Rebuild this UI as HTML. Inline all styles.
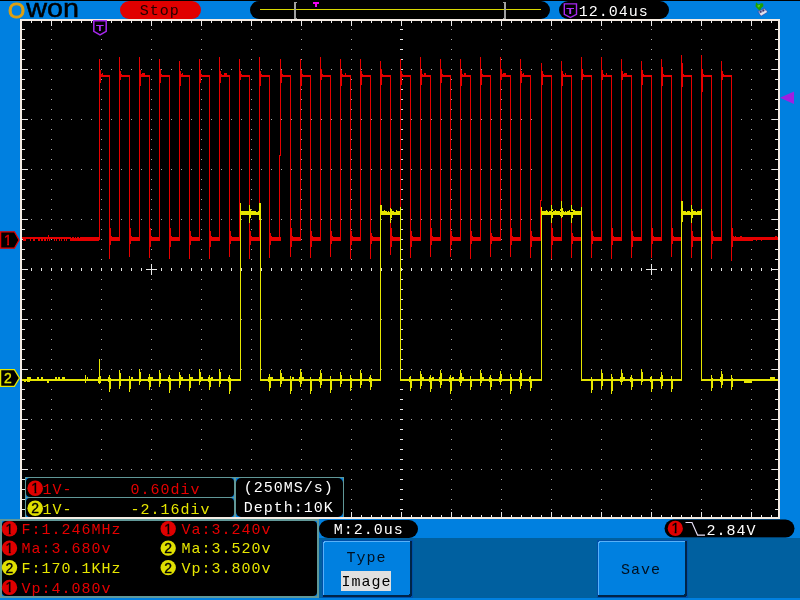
<!DOCTYPE html>
<html lang="en"><head><meta charset="utf-8"><title>OWON oscilloscope</title>
<style>
html,body{margin:0;padding:0;background:#0080e0;overflow:hidden}
svg{display:block;will-change:transform}
.m{font-family:"Liberation Mono","DejaVu Sans Mono",monospace;font-size:15px;letter-spacing:1px}
</style></head><body>
<svg width="800" height="600" viewBox="0 0 800 600">
<g shape-rendering="crispEdges">
<rect x="0" y="0" width="800" height="600" fill="#0080e0"/>
<rect x="0" y="0" width="800" height="1" fill="#000"/>
<rect x="20" y="19" width="760" height="500" fill="#f4ece4"/>
<rect x="22" y="21" width="756" height="496" fill="#000"/>
<path fill="#a8a8a8" d="M51 29h1v1h-1zM51 39h1v1h-1zM51 49h1v1h-1zM51 59h1v1h-1zM51 69h1v1h-1zM51 79h1v1h-1zM51 89h1v1h-1zM51 99h1v1h-1zM51 109h1v1h-1zM51 119h1v1h-1zM51 129h1v1h-1zM51 139h1v1h-1zM51 149h1v1h-1zM51 159h1v1h-1zM51 169h1v1h-1zM51 179h1v1h-1zM51 189h1v1h-1zM51 199h1v1h-1zM51 209h1v1h-1zM51 219h1v1h-1zM51 229h1v1h-1zM51 239h1v1h-1zM51 249h1v1h-1zM51 259h1v1h-1zM51 279h1v1h-1zM51 289h1v1h-1zM51 299h1v1h-1zM51 309h1v1h-1zM51 319h1v1h-1zM51 329h1v1h-1zM51 339h1v1h-1zM51 349h1v1h-1zM51 359h1v1h-1zM51 369h1v1h-1zM51 379h1v1h-1zM51 389h1v1h-1zM51 399h1v1h-1zM51 409h1v1h-1zM51 419h1v1h-1zM51 429h1v1h-1zM51 439h1v1h-1zM51 449h1v1h-1zM51 459h1v1h-1zM51 469h1v1h-1zM51 479h1v1h-1zM51 489h1v1h-1zM51 499h1v1h-1zM51 509h1v1h-1zM101 29h1v1h-1zM101 39h1v1h-1zM101 49h1v1h-1zM101 59h1v1h-1zM101 69h1v1h-1zM101 79h1v1h-1zM101 89h1v1h-1zM101 99h1v1h-1zM101 109h1v1h-1zM101 119h1v1h-1zM101 129h1v1h-1zM101 139h1v1h-1zM101 149h1v1h-1zM101 159h1v1h-1zM101 169h1v1h-1zM101 179h1v1h-1zM101 189h1v1h-1zM101 199h1v1h-1zM101 209h1v1h-1zM101 219h1v1h-1zM101 229h1v1h-1zM101 239h1v1h-1zM101 249h1v1h-1zM101 259h1v1h-1zM101 279h1v1h-1zM101 289h1v1h-1zM101 299h1v1h-1zM101 309h1v1h-1zM101 319h1v1h-1zM101 329h1v1h-1zM101 339h1v1h-1zM101 349h1v1h-1zM101 359h1v1h-1zM101 369h1v1h-1zM101 379h1v1h-1zM101 389h1v1h-1zM101 399h1v1h-1zM101 409h1v1h-1zM101 419h1v1h-1zM101 429h1v1h-1zM101 439h1v1h-1zM101 449h1v1h-1zM101 459h1v1h-1zM101 469h1v1h-1zM101 479h1v1h-1zM101 489h1v1h-1zM101 499h1v1h-1zM101 509h1v1h-1zM151 29h1v1h-1zM151 39h1v1h-1zM151 49h1v1h-1zM151 59h1v1h-1zM151 69h1v1h-1zM151 79h1v1h-1zM151 89h1v1h-1zM151 99h1v1h-1zM151 109h1v1h-1zM151 119h1v1h-1zM151 129h1v1h-1zM151 139h1v1h-1zM151 149h1v1h-1zM151 159h1v1h-1zM151 169h1v1h-1zM151 179h1v1h-1zM151 189h1v1h-1zM151 199h1v1h-1zM151 209h1v1h-1zM151 219h1v1h-1zM151 229h1v1h-1zM151 239h1v1h-1zM151 249h1v1h-1zM151 259h1v1h-1zM151 279h1v1h-1zM151 289h1v1h-1zM151 299h1v1h-1zM151 309h1v1h-1zM151 319h1v1h-1zM151 329h1v1h-1zM151 339h1v1h-1zM151 349h1v1h-1zM151 359h1v1h-1zM151 369h1v1h-1zM151 379h1v1h-1zM151 389h1v1h-1zM151 399h1v1h-1zM151 409h1v1h-1zM151 419h1v1h-1zM151 429h1v1h-1zM151 439h1v1h-1zM151 449h1v1h-1zM151 459h1v1h-1zM151 469h1v1h-1zM151 479h1v1h-1zM151 489h1v1h-1zM151 499h1v1h-1zM151 509h1v1h-1zM201 29h1v1h-1zM201 39h1v1h-1zM201 49h1v1h-1zM201 59h1v1h-1zM201 69h1v1h-1zM201 79h1v1h-1zM201 89h1v1h-1zM201 99h1v1h-1zM201 109h1v1h-1zM201 119h1v1h-1zM201 129h1v1h-1zM201 139h1v1h-1zM201 149h1v1h-1zM201 159h1v1h-1zM201 169h1v1h-1zM201 179h1v1h-1zM201 189h1v1h-1zM201 199h1v1h-1zM201 209h1v1h-1zM201 219h1v1h-1zM201 229h1v1h-1zM201 239h1v1h-1zM201 249h1v1h-1zM201 259h1v1h-1zM201 279h1v1h-1zM201 289h1v1h-1zM201 299h1v1h-1zM201 309h1v1h-1zM201 319h1v1h-1zM201 329h1v1h-1zM201 339h1v1h-1zM201 349h1v1h-1zM201 359h1v1h-1zM201 369h1v1h-1zM201 379h1v1h-1zM201 389h1v1h-1zM201 399h1v1h-1zM201 409h1v1h-1zM201 419h1v1h-1zM201 429h1v1h-1zM201 439h1v1h-1zM201 449h1v1h-1zM201 459h1v1h-1zM201 469h1v1h-1zM201 479h1v1h-1zM201 489h1v1h-1zM201 499h1v1h-1zM201 509h1v1h-1zM251 29h1v1h-1zM251 39h1v1h-1zM251 49h1v1h-1zM251 59h1v1h-1zM251 69h1v1h-1zM251 79h1v1h-1zM251 89h1v1h-1zM251 99h1v1h-1zM251 109h1v1h-1zM251 119h1v1h-1zM251 129h1v1h-1zM251 139h1v1h-1zM251 149h1v1h-1zM251 159h1v1h-1zM251 169h1v1h-1zM251 179h1v1h-1zM251 189h1v1h-1zM251 199h1v1h-1zM251 209h1v1h-1zM251 219h1v1h-1zM251 229h1v1h-1zM251 239h1v1h-1zM251 249h1v1h-1zM251 259h1v1h-1zM251 279h1v1h-1zM251 289h1v1h-1zM251 299h1v1h-1zM251 309h1v1h-1zM251 319h1v1h-1zM251 329h1v1h-1zM251 339h1v1h-1zM251 349h1v1h-1zM251 359h1v1h-1zM251 369h1v1h-1zM251 379h1v1h-1zM251 389h1v1h-1zM251 399h1v1h-1zM251 409h1v1h-1zM251 419h1v1h-1zM251 429h1v1h-1zM251 439h1v1h-1zM251 449h1v1h-1zM251 459h1v1h-1zM251 469h1v1h-1zM251 479h1v1h-1zM251 489h1v1h-1zM251 499h1v1h-1zM251 509h1v1h-1zM301 29h1v1h-1zM301 39h1v1h-1zM301 49h1v1h-1zM301 59h1v1h-1zM301 69h1v1h-1zM301 79h1v1h-1zM301 89h1v1h-1zM301 99h1v1h-1zM301 109h1v1h-1zM301 119h1v1h-1zM301 129h1v1h-1zM301 139h1v1h-1zM301 149h1v1h-1zM301 159h1v1h-1zM301 169h1v1h-1zM301 179h1v1h-1zM301 189h1v1h-1zM301 199h1v1h-1zM301 209h1v1h-1zM301 219h1v1h-1zM301 229h1v1h-1zM301 239h1v1h-1zM301 249h1v1h-1zM301 259h1v1h-1zM301 279h1v1h-1zM301 289h1v1h-1zM301 299h1v1h-1zM301 309h1v1h-1zM301 319h1v1h-1zM301 329h1v1h-1zM301 339h1v1h-1zM301 349h1v1h-1zM301 359h1v1h-1zM301 369h1v1h-1zM301 379h1v1h-1zM301 389h1v1h-1zM301 399h1v1h-1zM301 409h1v1h-1zM301 419h1v1h-1zM301 429h1v1h-1zM301 439h1v1h-1zM301 449h1v1h-1zM301 459h1v1h-1zM301 469h1v1h-1zM301 479h1v1h-1zM301 489h1v1h-1zM301 499h1v1h-1zM301 509h1v1h-1zM351 29h1v1h-1zM351 39h1v1h-1zM351 49h1v1h-1zM351 59h1v1h-1zM351 69h1v1h-1zM351 79h1v1h-1zM351 89h1v1h-1zM351 99h1v1h-1zM351 109h1v1h-1zM351 119h1v1h-1zM351 129h1v1h-1zM351 139h1v1h-1zM351 149h1v1h-1zM351 159h1v1h-1zM351 169h1v1h-1zM351 179h1v1h-1zM351 189h1v1h-1zM351 199h1v1h-1zM351 209h1v1h-1zM351 219h1v1h-1zM351 229h1v1h-1zM351 239h1v1h-1zM351 249h1v1h-1zM351 259h1v1h-1zM351 279h1v1h-1zM351 289h1v1h-1zM351 299h1v1h-1zM351 309h1v1h-1zM351 319h1v1h-1zM351 329h1v1h-1zM351 339h1v1h-1zM351 349h1v1h-1zM351 359h1v1h-1zM351 369h1v1h-1zM351 379h1v1h-1zM351 389h1v1h-1zM351 399h1v1h-1zM351 409h1v1h-1zM351 419h1v1h-1zM351 429h1v1h-1zM351 439h1v1h-1zM351 449h1v1h-1zM351 459h1v1h-1zM351 469h1v1h-1zM351 479h1v1h-1zM351 489h1v1h-1zM351 499h1v1h-1zM351 509h1v1h-1zM451 29h1v1h-1zM451 39h1v1h-1zM451 49h1v1h-1zM451 59h1v1h-1zM451 69h1v1h-1zM451 79h1v1h-1zM451 89h1v1h-1zM451 99h1v1h-1zM451 109h1v1h-1zM451 119h1v1h-1zM451 129h1v1h-1zM451 139h1v1h-1zM451 149h1v1h-1zM451 159h1v1h-1zM451 169h1v1h-1zM451 179h1v1h-1zM451 189h1v1h-1zM451 199h1v1h-1zM451 209h1v1h-1zM451 219h1v1h-1zM451 229h1v1h-1zM451 239h1v1h-1zM451 249h1v1h-1zM451 259h1v1h-1zM451 279h1v1h-1zM451 289h1v1h-1zM451 299h1v1h-1zM451 309h1v1h-1zM451 319h1v1h-1zM451 329h1v1h-1zM451 339h1v1h-1zM451 349h1v1h-1zM451 359h1v1h-1zM451 369h1v1h-1zM451 379h1v1h-1zM451 389h1v1h-1zM451 399h1v1h-1zM451 409h1v1h-1zM451 419h1v1h-1zM451 429h1v1h-1zM451 439h1v1h-1zM451 449h1v1h-1zM451 459h1v1h-1zM451 469h1v1h-1zM451 479h1v1h-1zM451 489h1v1h-1zM451 499h1v1h-1zM451 509h1v1h-1zM501 29h1v1h-1zM501 39h1v1h-1zM501 49h1v1h-1zM501 59h1v1h-1zM501 69h1v1h-1zM501 79h1v1h-1zM501 89h1v1h-1zM501 99h1v1h-1zM501 109h1v1h-1zM501 119h1v1h-1zM501 129h1v1h-1zM501 139h1v1h-1zM501 149h1v1h-1zM501 159h1v1h-1zM501 169h1v1h-1zM501 179h1v1h-1zM501 189h1v1h-1zM501 199h1v1h-1zM501 209h1v1h-1zM501 219h1v1h-1zM501 229h1v1h-1zM501 239h1v1h-1zM501 249h1v1h-1zM501 259h1v1h-1zM501 279h1v1h-1zM501 289h1v1h-1zM501 299h1v1h-1zM501 309h1v1h-1zM501 319h1v1h-1zM501 329h1v1h-1zM501 339h1v1h-1zM501 349h1v1h-1zM501 359h1v1h-1zM501 369h1v1h-1zM501 379h1v1h-1zM501 389h1v1h-1zM501 399h1v1h-1zM501 409h1v1h-1zM501 419h1v1h-1zM501 429h1v1h-1zM501 439h1v1h-1zM501 449h1v1h-1zM501 459h1v1h-1zM501 469h1v1h-1zM501 479h1v1h-1zM501 489h1v1h-1zM501 499h1v1h-1zM501 509h1v1h-1zM551 29h1v1h-1zM551 39h1v1h-1zM551 49h1v1h-1zM551 59h1v1h-1zM551 69h1v1h-1zM551 79h1v1h-1zM551 89h1v1h-1zM551 99h1v1h-1zM551 109h1v1h-1zM551 119h1v1h-1zM551 129h1v1h-1zM551 139h1v1h-1zM551 149h1v1h-1zM551 159h1v1h-1zM551 169h1v1h-1zM551 179h1v1h-1zM551 189h1v1h-1zM551 199h1v1h-1zM551 209h1v1h-1zM551 219h1v1h-1zM551 229h1v1h-1zM551 239h1v1h-1zM551 249h1v1h-1zM551 259h1v1h-1zM551 279h1v1h-1zM551 289h1v1h-1zM551 299h1v1h-1zM551 309h1v1h-1zM551 319h1v1h-1zM551 329h1v1h-1zM551 339h1v1h-1zM551 349h1v1h-1zM551 359h1v1h-1zM551 369h1v1h-1zM551 379h1v1h-1zM551 389h1v1h-1zM551 399h1v1h-1zM551 409h1v1h-1zM551 419h1v1h-1zM551 429h1v1h-1zM551 439h1v1h-1zM551 449h1v1h-1zM551 459h1v1h-1zM551 469h1v1h-1zM551 479h1v1h-1zM551 489h1v1h-1zM551 499h1v1h-1zM551 509h1v1h-1zM601 29h1v1h-1zM601 39h1v1h-1zM601 49h1v1h-1zM601 59h1v1h-1zM601 69h1v1h-1zM601 79h1v1h-1zM601 89h1v1h-1zM601 99h1v1h-1zM601 109h1v1h-1zM601 119h1v1h-1zM601 129h1v1h-1zM601 139h1v1h-1zM601 149h1v1h-1zM601 159h1v1h-1zM601 169h1v1h-1zM601 179h1v1h-1zM601 189h1v1h-1zM601 199h1v1h-1zM601 209h1v1h-1zM601 219h1v1h-1zM601 229h1v1h-1zM601 239h1v1h-1zM601 249h1v1h-1zM601 259h1v1h-1zM601 279h1v1h-1zM601 289h1v1h-1zM601 299h1v1h-1zM601 309h1v1h-1zM601 319h1v1h-1zM601 329h1v1h-1zM601 339h1v1h-1zM601 349h1v1h-1zM601 359h1v1h-1zM601 369h1v1h-1zM601 379h1v1h-1zM601 389h1v1h-1zM601 399h1v1h-1zM601 409h1v1h-1zM601 419h1v1h-1zM601 429h1v1h-1zM601 439h1v1h-1zM601 449h1v1h-1zM601 459h1v1h-1zM601 469h1v1h-1zM601 479h1v1h-1zM601 489h1v1h-1zM601 499h1v1h-1zM601 509h1v1h-1zM651 29h1v1h-1zM651 39h1v1h-1zM651 49h1v1h-1zM651 59h1v1h-1zM651 69h1v1h-1zM651 79h1v1h-1zM651 89h1v1h-1zM651 99h1v1h-1zM651 109h1v1h-1zM651 119h1v1h-1zM651 129h1v1h-1zM651 139h1v1h-1zM651 149h1v1h-1zM651 159h1v1h-1zM651 169h1v1h-1zM651 179h1v1h-1zM651 189h1v1h-1zM651 199h1v1h-1zM651 209h1v1h-1zM651 219h1v1h-1zM651 229h1v1h-1zM651 239h1v1h-1zM651 249h1v1h-1zM651 259h1v1h-1zM651 279h1v1h-1zM651 289h1v1h-1zM651 299h1v1h-1zM651 309h1v1h-1zM651 319h1v1h-1zM651 329h1v1h-1zM651 339h1v1h-1zM651 349h1v1h-1zM651 359h1v1h-1zM651 369h1v1h-1zM651 379h1v1h-1zM651 389h1v1h-1zM651 399h1v1h-1zM651 409h1v1h-1zM651 419h1v1h-1zM651 429h1v1h-1zM651 439h1v1h-1zM651 449h1v1h-1zM651 459h1v1h-1zM651 469h1v1h-1zM651 479h1v1h-1zM651 489h1v1h-1zM651 499h1v1h-1zM651 509h1v1h-1zM701 29h1v1h-1zM701 39h1v1h-1zM701 49h1v1h-1zM701 59h1v1h-1zM701 69h1v1h-1zM701 79h1v1h-1zM701 89h1v1h-1zM701 99h1v1h-1zM701 109h1v1h-1zM701 119h1v1h-1zM701 129h1v1h-1zM701 139h1v1h-1zM701 149h1v1h-1zM701 159h1v1h-1zM701 169h1v1h-1zM701 179h1v1h-1zM701 189h1v1h-1zM701 199h1v1h-1zM701 209h1v1h-1zM701 219h1v1h-1zM701 229h1v1h-1zM701 239h1v1h-1zM701 249h1v1h-1zM701 259h1v1h-1zM701 279h1v1h-1zM701 289h1v1h-1zM701 299h1v1h-1zM701 309h1v1h-1zM701 319h1v1h-1zM701 329h1v1h-1zM701 339h1v1h-1zM701 349h1v1h-1zM701 359h1v1h-1zM701 369h1v1h-1zM701 379h1v1h-1zM701 389h1v1h-1zM701 399h1v1h-1zM701 409h1v1h-1zM701 419h1v1h-1zM701 429h1v1h-1zM701 439h1v1h-1zM701 449h1v1h-1zM701 459h1v1h-1zM701 469h1v1h-1zM701 479h1v1h-1zM701 489h1v1h-1zM701 499h1v1h-1zM701 509h1v1h-1zM751 29h1v1h-1zM751 39h1v1h-1zM751 49h1v1h-1zM751 59h1v1h-1zM751 69h1v1h-1zM751 79h1v1h-1zM751 89h1v1h-1zM751 99h1v1h-1zM751 109h1v1h-1zM751 119h1v1h-1zM751 129h1v1h-1zM751 139h1v1h-1zM751 149h1v1h-1zM751 159h1v1h-1zM751 169h1v1h-1zM751 179h1v1h-1zM751 189h1v1h-1zM751 199h1v1h-1zM751 209h1v1h-1zM751 219h1v1h-1zM751 229h1v1h-1zM751 239h1v1h-1zM751 249h1v1h-1zM751 259h1v1h-1zM751 279h1v1h-1zM751 289h1v1h-1zM751 299h1v1h-1zM751 309h1v1h-1zM751 319h1v1h-1zM751 329h1v1h-1zM751 339h1v1h-1zM751 349h1v1h-1zM751 359h1v1h-1zM751 369h1v1h-1zM751 379h1v1h-1zM751 389h1v1h-1zM751 399h1v1h-1zM751 409h1v1h-1zM751 419h1v1h-1zM751 429h1v1h-1zM751 439h1v1h-1zM751 449h1v1h-1zM751 459h1v1h-1zM751 469h1v1h-1zM751 479h1v1h-1zM751 489h1v1h-1zM751 499h1v1h-1zM751 509h1v1h-1zM31 69h1v1h-1zM41 69h1v1h-1zM61 69h1v1h-1zM71 69h1v1h-1zM81 69h1v1h-1zM91 69h1v1h-1zM111 69h1v1h-1zM121 69h1v1h-1zM131 69h1v1h-1zM141 69h1v1h-1zM161 69h1v1h-1zM171 69h1v1h-1zM181 69h1v1h-1zM191 69h1v1h-1zM211 69h1v1h-1zM221 69h1v1h-1zM231 69h1v1h-1zM241 69h1v1h-1zM261 69h1v1h-1zM271 69h1v1h-1zM281 69h1v1h-1zM291 69h1v1h-1zM311 69h1v1h-1zM321 69h1v1h-1zM331 69h1v1h-1zM341 69h1v1h-1zM361 69h1v1h-1zM371 69h1v1h-1zM381 69h1v1h-1zM391 69h1v1h-1zM411 69h1v1h-1zM421 69h1v1h-1zM431 69h1v1h-1zM441 69h1v1h-1zM461 69h1v1h-1zM471 69h1v1h-1zM481 69h1v1h-1zM491 69h1v1h-1zM511 69h1v1h-1zM521 69h1v1h-1zM531 69h1v1h-1zM541 69h1v1h-1zM561 69h1v1h-1zM571 69h1v1h-1zM581 69h1v1h-1zM591 69h1v1h-1zM611 69h1v1h-1zM621 69h1v1h-1zM631 69h1v1h-1zM641 69h1v1h-1zM661 69h1v1h-1zM671 69h1v1h-1zM681 69h1v1h-1zM691 69h1v1h-1zM711 69h1v1h-1zM721 69h1v1h-1zM731 69h1v1h-1zM741 69h1v1h-1zM761 69h1v1h-1zM771 69h1v1h-1zM31 119h1v1h-1zM41 119h1v1h-1zM61 119h1v1h-1zM71 119h1v1h-1zM81 119h1v1h-1zM91 119h1v1h-1zM111 119h1v1h-1zM121 119h1v1h-1zM131 119h1v1h-1zM141 119h1v1h-1zM161 119h1v1h-1zM171 119h1v1h-1zM181 119h1v1h-1zM191 119h1v1h-1zM211 119h1v1h-1zM221 119h1v1h-1zM231 119h1v1h-1zM241 119h1v1h-1zM261 119h1v1h-1zM271 119h1v1h-1zM281 119h1v1h-1zM291 119h1v1h-1zM311 119h1v1h-1zM321 119h1v1h-1zM331 119h1v1h-1zM341 119h1v1h-1zM361 119h1v1h-1zM371 119h1v1h-1zM381 119h1v1h-1zM391 119h1v1h-1zM411 119h1v1h-1zM421 119h1v1h-1zM431 119h1v1h-1zM441 119h1v1h-1zM461 119h1v1h-1zM471 119h1v1h-1zM481 119h1v1h-1zM491 119h1v1h-1zM511 119h1v1h-1zM521 119h1v1h-1zM531 119h1v1h-1zM541 119h1v1h-1zM561 119h1v1h-1zM571 119h1v1h-1zM581 119h1v1h-1zM591 119h1v1h-1zM611 119h1v1h-1zM621 119h1v1h-1zM631 119h1v1h-1zM641 119h1v1h-1zM661 119h1v1h-1zM671 119h1v1h-1zM681 119h1v1h-1zM691 119h1v1h-1zM711 119h1v1h-1zM721 119h1v1h-1zM731 119h1v1h-1zM741 119h1v1h-1zM761 119h1v1h-1zM771 119h1v1h-1zM31 169h1v1h-1zM41 169h1v1h-1zM61 169h1v1h-1zM71 169h1v1h-1zM81 169h1v1h-1zM91 169h1v1h-1zM111 169h1v1h-1zM121 169h1v1h-1zM131 169h1v1h-1zM141 169h1v1h-1zM161 169h1v1h-1zM171 169h1v1h-1zM181 169h1v1h-1zM191 169h1v1h-1zM211 169h1v1h-1zM221 169h1v1h-1zM231 169h1v1h-1zM241 169h1v1h-1zM261 169h1v1h-1zM271 169h1v1h-1zM281 169h1v1h-1zM291 169h1v1h-1zM311 169h1v1h-1zM321 169h1v1h-1zM331 169h1v1h-1zM341 169h1v1h-1zM361 169h1v1h-1zM371 169h1v1h-1zM381 169h1v1h-1zM391 169h1v1h-1zM411 169h1v1h-1zM421 169h1v1h-1zM431 169h1v1h-1zM441 169h1v1h-1zM461 169h1v1h-1zM471 169h1v1h-1zM481 169h1v1h-1zM491 169h1v1h-1zM511 169h1v1h-1zM521 169h1v1h-1zM531 169h1v1h-1zM541 169h1v1h-1zM561 169h1v1h-1zM571 169h1v1h-1zM581 169h1v1h-1zM591 169h1v1h-1zM611 169h1v1h-1zM621 169h1v1h-1zM631 169h1v1h-1zM641 169h1v1h-1zM661 169h1v1h-1zM671 169h1v1h-1zM681 169h1v1h-1zM691 169h1v1h-1zM711 169h1v1h-1zM721 169h1v1h-1zM731 169h1v1h-1zM741 169h1v1h-1zM761 169h1v1h-1zM771 169h1v1h-1zM31 219h1v1h-1zM41 219h1v1h-1zM61 219h1v1h-1zM71 219h1v1h-1zM81 219h1v1h-1zM91 219h1v1h-1zM111 219h1v1h-1zM121 219h1v1h-1zM131 219h1v1h-1zM141 219h1v1h-1zM161 219h1v1h-1zM171 219h1v1h-1zM181 219h1v1h-1zM191 219h1v1h-1zM211 219h1v1h-1zM221 219h1v1h-1zM231 219h1v1h-1zM241 219h1v1h-1zM261 219h1v1h-1zM271 219h1v1h-1zM281 219h1v1h-1zM291 219h1v1h-1zM311 219h1v1h-1zM321 219h1v1h-1zM331 219h1v1h-1zM341 219h1v1h-1zM361 219h1v1h-1zM371 219h1v1h-1zM381 219h1v1h-1zM391 219h1v1h-1zM411 219h1v1h-1zM421 219h1v1h-1zM431 219h1v1h-1zM441 219h1v1h-1zM461 219h1v1h-1zM471 219h1v1h-1zM481 219h1v1h-1zM491 219h1v1h-1zM511 219h1v1h-1zM521 219h1v1h-1zM531 219h1v1h-1zM541 219h1v1h-1zM561 219h1v1h-1zM571 219h1v1h-1zM581 219h1v1h-1zM591 219h1v1h-1zM611 219h1v1h-1zM621 219h1v1h-1zM631 219h1v1h-1zM641 219h1v1h-1zM661 219h1v1h-1zM671 219h1v1h-1zM681 219h1v1h-1zM691 219h1v1h-1zM711 219h1v1h-1zM721 219h1v1h-1zM731 219h1v1h-1zM741 219h1v1h-1zM761 219h1v1h-1zM771 219h1v1h-1zM31 319h1v1h-1zM41 319h1v1h-1zM61 319h1v1h-1zM71 319h1v1h-1zM81 319h1v1h-1zM91 319h1v1h-1zM111 319h1v1h-1zM121 319h1v1h-1zM131 319h1v1h-1zM141 319h1v1h-1zM161 319h1v1h-1zM171 319h1v1h-1zM181 319h1v1h-1zM191 319h1v1h-1zM211 319h1v1h-1zM221 319h1v1h-1zM231 319h1v1h-1zM241 319h1v1h-1zM261 319h1v1h-1zM271 319h1v1h-1zM281 319h1v1h-1zM291 319h1v1h-1zM311 319h1v1h-1zM321 319h1v1h-1zM331 319h1v1h-1zM341 319h1v1h-1zM361 319h1v1h-1zM371 319h1v1h-1zM381 319h1v1h-1zM391 319h1v1h-1zM411 319h1v1h-1zM421 319h1v1h-1zM431 319h1v1h-1zM441 319h1v1h-1zM461 319h1v1h-1zM471 319h1v1h-1zM481 319h1v1h-1zM491 319h1v1h-1zM511 319h1v1h-1zM521 319h1v1h-1zM531 319h1v1h-1zM541 319h1v1h-1zM561 319h1v1h-1zM571 319h1v1h-1zM581 319h1v1h-1zM591 319h1v1h-1zM611 319h1v1h-1zM621 319h1v1h-1zM631 319h1v1h-1zM641 319h1v1h-1zM661 319h1v1h-1zM671 319h1v1h-1zM681 319h1v1h-1zM691 319h1v1h-1zM711 319h1v1h-1zM721 319h1v1h-1zM731 319h1v1h-1zM741 319h1v1h-1zM761 319h1v1h-1zM771 319h1v1h-1zM31 369h1v1h-1zM41 369h1v1h-1zM61 369h1v1h-1zM71 369h1v1h-1zM81 369h1v1h-1zM91 369h1v1h-1zM111 369h1v1h-1zM121 369h1v1h-1zM131 369h1v1h-1zM141 369h1v1h-1zM161 369h1v1h-1zM171 369h1v1h-1zM181 369h1v1h-1zM191 369h1v1h-1zM211 369h1v1h-1zM221 369h1v1h-1zM231 369h1v1h-1zM241 369h1v1h-1zM261 369h1v1h-1zM271 369h1v1h-1zM281 369h1v1h-1zM291 369h1v1h-1zM311 369h1v1h-1zM321 369h1v1h-1zM331 369h1v1h-1zM341 369h1v1h-1zM361 369h1v1h-1zM371 369h1v1h-1zM381 369h1v1h-1zM391 369h1v1h-1zM411 369h1v1h-1zM421 369h1v1h-1zM431 369h1v1h-1zM441 369h1v1h-1zM461 369h1v1h-1zM471 369h1v1h-1zM481 369h1v1h-1zM491 369h1v1h-1zM511 369h1v1h-1zM521 369h1v1h-1zM531 369h1v1h-1zM541 369h1v1h-1zM561 369h1v1h-1zM571 369h1v1h-1zM581 369h1v1h-1zM591 369h1v1h-1zM611 369h1v1h-1zM621 369h1v1h-1zM631 369h1v1h-1zM641 369h1v1h-1zM661 369h1v1h-1zM671 369h1v1h-1zM681 369h1v1h-1zM691 369h1v1h-1zM711 369h1v1h-1zM721 369h1v1h-1zM731 369h1v1h-1zM741 369h1v1h-1zM761 369h1v1h-1zM771 369h1v1h-1zM31 419h1v1h-1zM41 419h1v1h-1zM61 419h1v1h-1zM71 419h1v1h-1zM81 419h1v1h-1zM91 419h1v1h-1zM111 419h1v1h-1zM121 419h1v1h-1zM131 419h1v1h-1zM141 419h1v1h-1zM161 419h1v1h-1zM171 419h1v1h-1zM181 419h1v1h-1zM191 419h1v1h-1zM211 419h1v1h-1zM221 419h1v1h-1zM231 419h1v1h-1zM241 419h1v1h-1zM261 419h1v1h-1zM271 419h1v1h-1zM281 419h1v1h-1zM291 419h1v1h-1zM311 419h1v1h-1zM321 419h1v1h-1zM331 419h1v1h-1zM341 419h1v1h-1zM361 419h1v1h-1zM371 419h1v1h-1zM381 419h1v1h-1zM391 419h1v1h-1zM411 419h1v1h-1zM421 419h1v1h-1zM431 419h1v1h-1zM441 419h1v1h-1zM461 419h1v1h-1zM471 419h1v1h-1zM481 419h1v1h-1zM491 419h1v1h-1zM511 419h1v1h-1zM521 419h1v1h-1zM531 419h1v1h-1zM541 419h1v1h-1zM561 419h1v1h-1zM571 419h1v1h-1zM581 419h1v1h-1zM591 419h1v1h-1zM611 419h1v1h-1zM621 419h1v1h-1zM631 419h1v1h-1zM641 419h1v1h-1zM661 419h1v1h-1zM671 419h1v1h-1zM681 419h1v1h-1zM691 419h1v1h-1zM711 419h1v1h-1zM721 419h1v1h-1zM731 419h1v1h-1zM741 419h1v1h-1zM761 419h1v1h-1zM771 419h1v1h-1zM31 469h1v1h-1zM41 469h1v1h-1zM61 469h1v1h-1zM71 469h1v1h-1zM81 469h1v1h-1zM91 469h1v1h-1zM111 469h1v1h-1zM121 469h1v1h-1zM131 469h1v1h-1zM141 469h1v1h-1zM161 469h1v1h-1zM171 469h1v1h-1zM181 469h1v1h-1zM191 469h1v1h-1zM211 469h1v1h-1zM221 469h1v1h-1zM231 469h1v1h-1zM241 469h1v1h-1zM261 469h1v1h-1zM271 469h1v1h-1zM281 469h1v1h-1zM291 469h1v1h-1zM311 469h1v1h-1zM321 469h1v1h-1zM331 469h1v1h-1zM341 469h1v1h-1zM361 469h1v1h-1zM371 469h1v1h-1zM381 469h1v1h-1zM391 469h1v1h-1zM411 469h1v1h-1zM421 469h1v1h-1zM431 469h1v1h-1zM441 469h1v1h-1zM461 469h1v1h-1zM471 469h1v1h-1zM481 469h1v1h-1zM491 469h1v1h-1zM511 469h1v1h-1zM521 469h1v1h-1zM531 469h1v1h-1zM541 469h1v1h-1zM561 469h1v1h-1zM571 469h1v1h-1zM581 469h1v1h-1zM591 469h1v1h-1zM611 469h1v1h-1zM621 469h1v1h-1zM631 469h1v1h-1zM641 469h1v1h-1zM661 469h1v1h-1zM671 469h1v1h-1zM681 469h1v1h-1zM691 469h1v1h-1zM711 469h1v1h-1zM721 469h1v1h-1zM731 469h1v1h-1zM741 469h1v1h-1zM761 469h1v1h-1zM771 469h1v1h-1z"/>
<path fill="#e8e8e8" d="M31 21h1v2h-1zM31 515h1v2h-1zM41 21h1v2h-1zM41 515h1v2h-1zM51 21h1v5h-1zM51 512h1v5h-1zM61 21h1v2h-1zM61 515h1v2h-1zM71 21h1v2h-1zM71 515h1v2h-1zM81 21h1v2h-1zM81 515h1v2h-1zM91 21h1v2h-1zM91 515h1v2h-1zM101 21h1v5h-1zM101 512h1v5h-1zM111 21h1v2h-1zM111 515h1v2h-1zM121 21h1v2h-1zM121 515h1v2h-1zM131 21h1v2h-1zM131 515h1v2h-1zM141 21h1v2h-1zM141 515h1v2h-1zM151 21h1v5h-1zM151 512h1v5h-1zM161 21h1v2h-1zM161 515h1v2h-1zM171 21h1v2h-1zM171 515h1v2h-1zM181 21h1v2h-1zM181 515h1v2h-1zM191 21h1v2h-1zM191 515h1v2h-1zM201 21h1v5h-1zM201 512h1v5h-1zM211 21h1v2h-1zM211 515h1v2h-1zM221 21h1v2h-1zM221 515h1v2h-1zM231 21h1v2h-1zM231 515h1v2h-1zM241 21h1v2h-1zM241 515h1v2h-1zM251 21h1v5h-1zM251 512h1v5h-1zM261 21h1v2h-1zM261 515h1v2h-1zM271 21h1v2h-1zM271 515h1v2h-1zM281 21h1v2h-1zM281 515h1v2h-1zM291 21h1v2h-1zM291 515h1v2h-1zM301 21h1v5h-1zM301 512h1v5h-1zM311 21h1v2h-1zM311 515h1v2h-1zM321 21h1v2h-1zM321 515h1v2h-1zM331 21h1v2h-1zM331 515h1v2h-1zM341 21h1v2h-1zM341 515h1v2h-1zM351 21h1v5h-1zM351 512h1v5h-1zM361 21h1v2h-1zM361 515h1v2h-1zM371 21h1v2h-1zM371 515h1v2h-1zM381 21h1v2h-1zM381 515h1v2h-1zM391 21h1v2h-1zM391 515h1v2h-1zM401 21h1v5h-1zM401 512h1v5h-1zM411 21h1v2h-1zM411 515h1v2h-1zM421 21h1v2h-1zM421 515h1v2h-1zM431 21h1v2h-1zM431 515h1v2h-1zM441 21h1v2h-1zM441 515h1v2h-1zM451 21h1v5h-1zM451 512h1v5h-1zM461 21h1v2h-1zM461 515h1v2h-1zM471 21h1v2h-1zM471 515h1v2h-1zM481 21h1v2h-1zM481 515h1v2h-1zM491 21h1v2h-1zM491 515h1v2h-1zM501 21h1v5h-1zM501 512h1v5h-1zM511 21h1v2h-1zM511 515h1v2h-1zM521 21h1v2h-1zM521 515h1v2h-1zM531 21h1v2h-1zM531 515h1v2h-1zM541 21h1v2h-1zM541 515h1v2h-1zM551 21h1v5h-1zM551 512h1v5h-1zM561 21h1v2h-1zM561 515h1v2h-1zM571 21h1v2h-1zM571 515h1v2h-1zM581 21h1v2h-1zM581 515h1v2h-1zM591 21h1v2h-1zM591 515h1v2h-1zM601 21h1v5h-1zM601 512h1v5h-1zM611 21h1v2h-1zM611 515h1v2h-1zM621 21h1v2h-1zM621 515h1v2h-1zM631 21h1v2h-1zM631 515h1v2h-1zM641 21h1v2h-1zM641 515h1v2h-1zM651 21h1v5h-1zM651 512h1v5h-1zM661 21h1v2h-1zM661 515h1v2h-1zM671 21h1v2h-1zM671 515h1v2h-1zM681 21h1v2h-1zM681 515h1v2h-1zM691 21h1v2h-1zM691 515h1v2h-1zM701 21h1v5h-1zM701 512h1v5h-1zM711 21h1v2h-1zM711 515h1v2h-1zM721 21h1v2h-1zM721 515h1v2h-1zM731 21h1v2h-1zM731 515h1v2h-1zM741 21h1v2h-1zM741 515h1v2h-1zM751 21h1v5h-1zM751 512h1v5h-1zM761 21h1v2h-1zM761 515h1v2h-1zM771 21h1v2h-1zM771 515h1v2h-1zM22 29h3v1h-3zM775 29h3v1h-3zM22 39h3v1h-3zM775 39h3v1h-3zM22 49h3v1h-3zM775 49h3v1h-3zM22 59h3v1h-3zM775 59h3v1h-3zM22 69h6v1h-6zM772 69h6v1h-6zM22 79h3v1h-3zM775 79h3v1h-3zM22 89h3v1h-3zM775 89h3v1h-3zM22 99h3v1h-3zM775 99h3v1h-3zM22 109h3v1h-3zM775 109h3v1h-3zM22 119h6v1h-6zM772 119h6v1h-6zM22 129h3v1h-3zM775 129h3v1h-3zM22 139h3v1h-3zM775 139h3v1h-3zM22 149h3v1h-3zM775 149h3v1h-3zM22 159h3v1h-3zM775 159h3v1h-3zM22 169h6v1h-6zM772 169h6v1h-6zM22 179h3v1h-3zM775 179h3v1h-3zM22 189h3v1h-3zM775 189h3v1h-3zM22 199h3v1h-3zM775 199h3v1h-3zM22 209h3v1h-3zM775 209h3v1h-3zM22 219h6v1h-6zM772 219h6v1h-6zM22 229h3v1h-3zM775 229h3v1h-3zM22 239h3v1h-3zM775 239h3v1h-3zM22 249h3v1h-3zM775 249h3v1h-3zM22 259h3v1h-3zM775 259h3v1h-3zM22 269h6v1h-6zM772 269h6v1h-6zM22 279h3v1h-3zM775 279h3v1h-3zM22 289h3v1h-3zM775 289h3v1h-3zM22 299h3v1h-3zM775 299h3v1h-3zM22 309h3v1h-3zM775 309h3v1h-3zM22 319h6v1h-6zM772 319h6v1h-6zM22 329h3v1h-3zM775 329h3v1h-3zM22 339h3v1h-3zM775 339h3v1h-3zM22 349h3v1h-3zM775 349h3v1h-3zM22 359h3v1h-3zM775 359h3v1h-3zM22 369h6v1h-6zM772 369h6v1h-6zM22 379h3v1h-3zM775 379h3v1h-3zM22 389h3v1h-3zM775 389h3v1h-3zM22 399h3v1h-3zM775 399h3v1h-3zM22 409h3v1h-3zM775 409h3v1h-3zM22 419h6v1h-6zM772 419h6v1h-6zM22 429h3v1h-3zM775 429h3v1h-3zM22 439h3v1h-3zM775 439h3v1h-3zM22 449h3v1h-3zM775 449h3v1h-3zM22 459h3v1h-3zM775 459h3v1h-3zM22 469h6v1h-6zM772 469h6v1h-6zM22 479h3v1h-3zM775 479h3v1h-3zM22 489h3v1h-3zM775 489h3v1h-3zM22 499h3v1h-3zM775 499h3v1h-3zM22 509h3v1h-3zM775 509h3v1h-3zM31 268h1v3h-1zM41 268h1v3h-1zM51 268h1v3h-1zM61 268h1v3h-1zM71 268h1v3h-1zM81 268h1v3h-1zM91 268h1v3h-1zM101 268h1v3h-1zM111 268h1v3h-1zM121 268h1v3h-1zM131 268h1v3h-1zM141 268h1v3h-1zM151 268h1v3h-1zM161 268h1v3h-1zM171 268h1v3h-1zM181 268h1v3h-1zM191 268h1v3h-1zM201 268h1v3h-1zM211 268h1v3h-1zM221 268h1v3h-1zM231 268h1v3h-1zM241 268h1v3h-1zM251 268h1v3h-1zM261 268h1v3h-1zM271 268h1v3h-1zM281 268h1v3h-1zM291 268h1v3h-1zM301 268h1v3h-1zM311 268h1v3h-1zM321 268h1v3h-1zM331 268h1v3h-1zM341 268h1v3h-1zM351 268h1v3h-1zM361 268h1v3h-1zM371 268h1v3h-1zM381 268h1v3h-1zM391 268h1v3h-1zM401 268h1v3h-1zM411 268h1v3h-1zM421 268h1v3h-1zM431 268h1v3h-1zM441 268h1v3h-1zM451 268h1v3h-1zM461 268h1v3h-1zM471 268h1v3h-1zM481 268h1v3h-1zM491 268h1v3h-1zM501 268h1v3h-1zM511 268h1v3h-1zM521 268h1v3h-1zM531 268h1v3h-1zM541 268h1v3h-1zM551 268h1v3h-1zM561 268h1v3h-1zM571 268h1v3h-1zM581 268h1v3h-1zM591 268h1v3h-1zM601 268h1v3h-1zM611 268h1v3h-1zM621 268h1v3h-1zM631 268h1v3h-1zM641 268h1v3h-1zM651 268h1v3h-1zM661 268h1v3h-1zM671 268h1v3h-1zM681 268h1v3h-1zM691 268h1v3h-1zM701 268h1v3h-1zM711 268h1v3h-1zM721 268h1v3h-1zM731 268h1v3h-1zM741 268h1v3h-1zM751 268h1v3h-1zM761 268h1v3h-1zM771 268h1v3h-1zM400 29h3v1h-3zM400 39h3v1h-3zM400 49h3v1h-3zM400 59h3v1h-3zM400 69h3v1h-3zM400 79h3v1h-3zM400 89h3v1h-3zM400 99h3v1h-3zM400 109h3v1h-3zM400 119h3v1h-3zM400 129h3v1h-3zM400 139h3v1h-3zM400 149h3v1h-3zM400 159h3v1h-3zM400 169h3v1h-3zM400 179h3v1h-3zM400 189h3v1h-3zM400 199h3v1h-3zM400 209h3v1h-3zM400 219h3v1h-3zM400 229h3v1h-3zM400 239h3v1h-3zM400 249h3v1h-3zM400 259h3v1h-3zM400 269h3v1h-3zM400 279h3v1h-3zM400 289h3v1h-3zM400 299h3v1h-3zM400 309h3v1h-3zM400 319h3v1h-3zM400 329h3v1h-3zM400 339h3v1h-3zM400 349h3v1h-3zM400 359h3v1h-3zM400 369h3v1h-3zM400 379h3v1h-3zM400 389h3v1h-3zM400 399h3v1h-3zM400 409h3v1h-3zM400 419h3v1h-3zM400 429h3v1h-3zM400 439h3v1h-3zM400 449h3v1h-3zM400 459h3v1h-3zM400 469h3v1h-3zM400 479h3v1h-3zM400 489h3v1h-3zM400 499h3v1h-3zM400 509h3v1h-3zM146 269h11v1h-11zM151 264h1v11h-1zM646 269h11v1h-11zM651 264h1v11h-1z"/>
<path fill="#e60000" d="M22 237h78v2h-78zM23 239h3v2h-3zM30 239h1v2h-1zM33 239h2v2h-2zM38 239h2v2h-2zM41 239h2v2h-2zM44 239h2v2h-2zM47 239h1v2h-1zM49 239h1v2h-1zM54 239h1v2h-1zM56 239h1v2h-1zM59 239h1v2h-1zM61 239h1v2h-1zM64 239h1v2h-1zM66 239h1v2h-1zM48 235h1v2h-1zM70 238h29v3h-29zM99 59h1v181h-1zM100 70h1v13h-1zM101 74h1v3h-1zM99 75h11v2h-11zM102 73h1v2h-1zM109 75h1v184h-1zM110 228h1v17h-1zM111 236h1v5h-1zM109 237h11v4h-11zM119 57h1v183h-1zM120 71h1v9h-1zM121 74h1v3h-1zM119 75h11v2h-11zM129 75h1v182h-1zM130 228h1v16h-1zM131 236h1v5h-1zM129 237h11v4h-11zM139 57h1v183h-1zM140 70h1v16h-1zM141 74h1v3h-1zM139 75h11v2h-11zM142 73h3v2h-3zM149 75h1v183h-1zM150 228h1v19h-1zM151 236h1v5h-1zM149 237h11v4h-11zM159 59h1v181h-1zM160 69h1v14h-1zM161 74h1v3h-1zM159 75h11v2h-11zM169 75h1v184h-1zM170 228h1v19h-1zM171 236h1v5h-1zM169 237h11v4h-11zM179 61h1v179h-1zM180 71h1v15h-1zM181 74h1v3h-1zM179 75h11v2h-11zM182 73h1v2h-1zM189 75h1v184h-1zM190 231h1v14h-1zM191 236h1v5h-1zM189 237h11v4h-11zM199 59h1v181h-1zM200 70h1v13h-1zM201 74h1v3h-1zM199 75h11v2h-11zM209 75h1v184h-1zM210 231h1v16h-1zM211 236h1v5h-1zM209 237h11v4h-11zM219 57h1v183h-1zM220 71h1v12h-1zM221 74h1v3h-1zM219 75h11v2h-11zM224 73h3v2h-3zM229 75h1v182h-1zM230 231h1v13h-1zM231 236h1v5h-1zM229 237h11v4h-11zM239 59h1v181h-1zM240 71h1v9h-1zM241 74h1v3h-1zM239 75h11v2h-11zM249 75h1v184h-1zM250 231h1v14h-1zM251 236h1v5h-1zM249 237h11v4h-11zM259 57h1v183h-1zM260 71h1v15h-1zM261 74h1v3h-1zM259 75h11v2h-11zM269 75h1v183h-1zM270 233h1v12h-1zM271 236h1v5h-1zM269 237h12v4h-12zM280 59h1v97h-1zM279 155h1v85h-1zM281 70h1v13h-1zM282 74h1v3h-1zM280 75h11v2h-11zM290 75h1v182h-1zM291 228h1v19h-1zM292 236h1v5h-1zM290 237h11v4h-11zM300 59h1v181h-1zM301 70h1v16h-1zM302 74h1v3h-1zM300 75h11v2h-11zM310 75h1v183h-1zM311 231h1v16h-1zM312 236h1v5h-1zM310 237h11v4h-11zM320 57h1v183h-1zM321 69h1v11h-1zM322 74h1v3h-1zM320 75h11v2h-11zM330 75h1v182h-1zM331 231h1v13h-1zM332 236h1v5h-1zM330 237h11v4h-11zM340 59h1v181h-1zM341 70h1v16h-1zM342 74h1v3h-1zM340 75h11v2h-11zM345 73h1v2h-1zM350 75h1v184h-1zM351 231h1v14h-1zM352 236h1v5h-1zM350 237h11v4h-11zM360 59h1v181h-1zM361 71h1v14h-1zM362 74h1v3h-1zM360 75h11v2h-11zM370 75h1v184h-1zM371 233h1v11h-1zM372 236h1v5h-1zM370 237h11v4h-11zM380 61h1v179h-1zM381 69h1v16h-1zM382 74h1v3h-1zM380 75h11v2h-11zM390 75h1v180h-1zM391 228h1v19h-1zM392 236h1v5h-1zM390 237h11v4h-11zM400 59h1v181h-1zM401 71h1v14h-1zM402 74h1v3h-1zM400 75h11v2h-11zM410 75h1v183h-1zM411 231h1v16h-1zM412 236h1v5h-1zM410 237h11v4h-11zM420 57h1v183h-1zM421 70h1v15h-1zM422 74h1v3h-1zM420 75h11v2h-11zM424 73h2v2h-2zM430 75h1v182h-1zM431 228h1v17h-1zM432 236h1v5h-1zM430 237h11v4h-11zM440 59h1v181h-1zM441 69h1v14h-1zM442 74h1v3h-1zM440 75h11v2h-11zM450 75h1v182h-1zM451 231h1v14h-1zM452 236h1v5h-1zM450 237h11v4h-11zM460 59h1v181h-1zM461 70h1v16h-1zM462 74h1v3h-1zM460 75h11v2h-11zM464 73h2v2h-2zM470 75h1v184h-1zM471 231h1v13h-1zM472 236h1v5h-1zM470 237h11v4h-11zM480 57h1v183h-1zM481 70h1v15h-1zM482 74h1v3h-1zM480 75h11v2h-11zM490 75h1v182h-1zM491 233h1v11h-1zM492 236h1v5h-1zM490 237h11v4h-11zM500 57h1v183h-1zM501 69h1v11h-1zM502 74h1v3h-1zM500 75h11v2h-11zM503 73h3v2h-3zM510 75h1v182h-1zM511 228h1v17h-1zM512 236h1v5h-1zM510 237h11v4h-11zM520 59h1v181h-1zM521 71h1v12h-1zM522 74h1v3h-1zM520 75h11v2h-11zM523 73h1v2h-1zM530 75h1v183h-1zM531 231h1v16h-1zM532 236h1v5h-1zM530 237h12v4h-12zM541 63h1v138h-1zM540 200h1v40h-1zM542 71h1v14h-1zM543 74h1v3h-1zM541 75h11v2h-11zM551 75h1v184h-1zM552 228h1v17h-1zM553 236h1v5h-1zM551 237h11v4h-11zM561 61h1v179h-1zM562 71h1v15h-1zM563 74h1v3h-1zM561 75h11v2h-11zM565 73h1v2h-1zM571 75h1v183h-1zM572 233h1v11h-1zM573 236h1v5h-1zM571 237h11v4h-11zM581 57h1v183h-1zM582 69h1v11h-1zM583 74h1v3h-1zM581 75h11v2h-11zM591 75h1v183h-1zM592 231h1v13h-1zM593 236h1v5h-1zM591 237h11v4h-11zM601 57h1v183h-1zM602 70h1v10h-1zM603 74h1v3h-1zM601 75h11v2h-11zM606 73h1v2h-1zM611 75h1v184h-1zM612 228h1v17h-1zM613 236h1v5h-1zM611 237h11v4h-11zM621 59h1v181h-1zM622 71h1v9h-1zM623 74h1v3h-1zM621 75h11v2h-11zM624 73h3v2h-3zM631 75h1v183h-1zM632 231h1v16h-1zM633 236h1v5h-1zM631 237h11v4h-11zM641 61h1v179h-1zM642 70h1v15h-1zM643 74h1v3h-1zM641 75h11v2h-11zM651 75h1v183h-1zM652 228h1v16h-1zM653 236h1v5h-1zM651 237h11v4h-11zM661 59h1v181h-1zM662 67h1v19h-1zM663 74h1v3h-1zM661 75h11v2h-11zM671 75h1v182h-1zM672 228h1v16h-1zM673 236h1v5h-1zM671 237h11v4h-11zM681 55h1v185h-1zM682 63h1v24h-1zM683 74h1v3h-1zM681 75h11v2h-11zM691 75h1v183h-1zM692 231h1v16h-1zM693 236h1v5h-1zM691 237h11v4h-11zM701 55h1v185h-1zM702 69h1v23h-1zM703 74h1v3h-1zM701 75h11v2h-11zM711 75h1v184h-1zM712 231h1v13h-1zM713 236h1v5h-1zM711 237h11v4h-11zM721 61h1v179h-1zM722 71h1v9h-1zM723 74h1v3h-1zM721 75h11v2h-11zM731 75h1v186h-1zM732 228h1v19h-1zM733 236h1v5h-1zM731 237h47v3h-47zM731 240h22v1h-22zM735 236h1v1h-1zM740 236h1v1h-1zM741 236h1v1h-1zM775 236h1v1h-1zM776 236h1v1h-1zM756 240h1v1h-1zM761 240h1v1h-1z"/>
<path fill="#000" d="M71 237h1v1h-1zM74 237h1v1h-1zM76 237h1v1h-1zM79 237h1v1h-1z"/>
<path fill="#e6e600" d="M22 379h219v2h-219zM260 379h121v2h-121zM400 379h142v2h-142zM581 379h101v2h-101zM701 379h77v2h-77zM24 381h2v1h-2zM27 381h3v1h-3zM27 377h4v2h-4zM37 377h2v2h-2zM41 377h2v2h-2zM55 377h2v2h-2zM58 377h2v2h-2zM62 377h3v2h-3zM47 381h2v2h-2zM85 375h1v8h-1zM87 377h1v4h-1zM744 381h8v2h-8zM770 377h5v2h-5zM240 211h21v4h-21zM240 203h1v178h-1zM260 203h1v178h-1zM259 203h1v17h-1zM380 211h21v4h-21zM380 205h1v176h-1zM400 207h1v174h-1zM381 205h1v7h-1zM384 210h1v1h-1zM396 210h1v1h-1zM541 211h41v4h-41zM541 207h1v174h-1zM581 207h1v174h-1zM546 210h1v1h-1zM551 210h1v1h-1zM555 210h1v1h-1zM569 210h1v1h-1zM573 210h1v1h-1zM574 210h1v1h-1zM681 211h21v4h-21zM681 201h1v180h-1zM701 209h1v172h-1zM682 201h1v21h-1zM99 359h1v25h-1zM100 376h1v7h-1zM98 377h1v6h-1zM109 375h1v17h-1zM110 378h1v11h-1zM108 377h1v5h-1zM119 370h1v19h-1zM120 373h1v13h-1zM129 376h1v16h-1zM130 379h1v10h-1zM131 377h2v2h-2zM139 369h1v16h-1zM140 372h1v10h-1zM149 374h1v16h-1zM150 377h1v10h-1zM148 377h1v5h-1zM151 377h2v2h-2zM159 370h1v17h-1zM160 373h1v11h-1zM169 375h1v18h-1zM170 378h1v12h-1zM168 377h1v5h-1zM179 372h1v16h-1zM180 375h1v10h-1zM181 377h2v2h-2zM189 374h1v17h-1zM190 377h1v11h-1zM191 377h2v2h-2zM199 369h1v16h-1zM200 372h1v10h-1zM201 377h2v2h-2zM209 375h1v15h-1zM210 378h1v9h-1zM208 377h1v5h-1zM211 377h2v2h-2zM219 369h1v18h-1zM220 372h1v12h-1zM229 375h1v19h-1zM230 378h1v13h-1zM228 377h1v5h-1zM249 205h1v18h-1zM250 209h1v9h-1zM269 374h1v17h-1zM270 377h1v11h-1zM268 377h1v5h-1zM271 377h2v2h-2zM280 370h1v17h-1zM281 373h1v11h-1zM282 377h2v2h-2zM290 376h1v18h-1zM291 379h1v12h-1zM292 377h2v2h-2zM300 369h1v18h-1zM301 372h1v12h-1zM299 377h1v5h-1zM302 377h2v2h-2zM310 377h1v17h-1zM311 380h1v11h-1zM320 370h1v18h-1zM321 373h1v12h-1zM319 377h1v5h-1zM330 376h1v17h-1zM331 379h1v11h-1zM340 372h1v15h-1zM341 375h1v9h-1zM350 375h1v16h-1zM351 378h1v10h-1zM360 370h1v18h-1zM361 373h1v12h-1zM370 375h1v15h-1zM371 378h1v9h-1zM369 377h1v5h-1zM390 208h1v15h-1zM391 209h1v9h-1zM410 376h1v15h-1zM411 379h1v9h-1zM409 377h1v5h-1zM420 371h1v18h-1zM421 374h1v12h-1zM422 377h2v2h-2zM430 375h1v17h-1zM431 378h1v11h-1zM429 377h1v5h-1zM432 377h2v2h-2zM440 370h1v18h-1zM441 373h1v12h-1zM439 377h1v5h-1zM450 375h1v19h-1zM451 378h1v13h-1zM449 377h1v5h-1zM452 377h2v2h-2zM460 370h1v16h-1zM461 373h1v10h-1zM459 377h1v5h-1zM462 377h2v2h-2zM470 376h1v14h-1zM471 379h1v8h-1zM480 370h1v16h-1zM481 373h1v10h-1zM482 377h2v2h-2zM490 375h1v15h-1zM491 378h1v9h-1zM489 377h1v5h-1zM500 371h1v14h-1zM501 374h1v8h-1zM499 377h1v5h-1zM510 374h1v20h-1zM511 377h1v14h-1zM520 370h1v19h-1zM521 373h1v13h-1zM519 377h1v5h-1zM530 376h1v15h-1zM531 379h1v9h-1zM529 377h1v5h-1zM551 205h1v18h-1zM552 209h1v9h-1zM561 201h1v17h-1zM562 208h1v9h-1zM560 209h1v7h-1zM571 205h1v18h-1zM572 209h1v9h-1zM591 377h1v16h-1zM592 380h1v10h-1zM601 370h1v19h-1zM602 373h1v13h-1zM611 374h1v20h-1zM612 377h1v14h-1zM621 370h1v15h-1zM622 373h1v9h-1zM620 377h1v5h-1zM623 377h2v2h-2zM631 375h1v15h-1zM632 378h1v9h-1zM630 377h1v5h-1zM641 369h1v16h-1zM642 372h1v10h-1zM651 376h1v16h-1zM652 379h1v10h-1zM650 377h1v5h-1zM661 372h1v17h-1zM662 375h1v11h-1zM660 377h1v5h-1zM671 376h1v16h-1zM672 379h1v10h-1zM691 205h1v18h-1zM692 209h1v9h-1zM711 375h1v16h-1zM712 378h1v10h-1zM721 371h1v17h-1zM722 374h1v11h-1zM720 377h1v5h-1zM731 375h1v15h-1zM732 378h1v9h-1z"/>
<path fill="#000" d="M256 211h1v1h-1zM257 211h1v1h-1zM387 211h1v1h-1zM389 211h1v1h-1zM394 211h1v1h-1zM395 211h1v1h-1zM548 211h1v1h-1zM552 211h1v1h-1zM560 211h1v1h-1zM564 211h1v1h-1zM566 211h1v1h-1zM570 211h1v1h-1zM571 211h1v1h-1zM572 211h1v1h-1zM686 211h1v1h-1zM690 211h1v1h-1zM696 211h1v1h-1z"/>
</g>
<!-- ===== top bar ===== -->
<g font-family="'Liberation Sans', sans-serif">
  <text x="7.9" y="17.8" font-size="22" fill="#e0a010" stroke="#e0a010" stroke-width="0.9">O</text>
  <text x="26.2" y="17.4" font-size="26.5" fill="#000" stroke="#000" stroke-width="0.5" textLength="52.8" lengthAdjust="spacingAndGlyphs">won</text>
</g>
<rect x="120" y="1" width="81" height="18" rx="9" fill="#e00000"/>
<text x="139.8" y="15" class="m" fill="#200000">Stop</text>
<rect x="250" y="1" width="300" height="18" rx="9" fill="#000"/>
<g shape-rendering="crispEdges">
  <rect x="260" y="9" width="281" height="1" fill="#d8d800"/>
  <path fill="#a0a0a0" d="M294 2h3v1h-1v15h1v1h-3zM506 2h-3v1h1v15h-1v1h3z"/>
  <path fill="#f000f0" d="M313 2h6v2h-2v3h-2v-3h-2z"/>
</g>
<rect x="559" y="1" width="110" height="18" rx="9" fill="#000"/>
<path d="M564.3 3.9h12.2v10.4l-6.1 3.2l-6.1-3.2z" fill="#000" stroke="#a828f0" stroke-width="1.4"/>
<text transform="translate(570.3,13.8) scale(1.35,1)" font-family="'Liberation Sans', sans-serif" font-weight="bold" font-size="9.6" fill="#b030f8" text-anchor="middle">T</text>
<text x="578.8" y="15.6" class="m" fill="#fff">12.04us</text>
<!-- usb icon -->
<g>
  <path d="M756 2.3L758.5 4.6L761 3.2L763.2 3.5L763.4 6.2L761.2 8L760 10.9L757.4 8.6L755.5 6.4z" fill="#1fa000"/>
  <path d="M757 5.8l3.4-1.2l-1.4 3.2z" fill="#5cd020"/>
  <path d="M757.8 11.6L764.6 8.3L767.6 12L761 16.3z" fill="#9c9cc0" stroke="#2848b0" stroke-width="0.6"/>
  <path d="M759.6 13.4L766.2 10.4L766.9 11.9L761.1 15.5z" fill="#e4e0ec"/>
  <circle cx="760.7" cy="11.8" r="0.9" fill="#403068"/>
  <circle cx="763.3" cy="10.5" r="0.9" fill="#403068"/>
</g>
<!-- trigger T at plot top -->
<path d="M93.8 20.8h12.4v10.6l-6.2 3.4l-6.2-3.4z" fill="#000" stroke="#a828f0" stroke-width="1.5"/>
<text transform="translate(100,31) scale(1.3,1)" font-family="'Liberation Sans', sans-serif" font-weight="bold" font-size="9.8" fill="#b030f8" text-anchor="middle">T</text>
<!-- trigger level arrow -->
<path d="M780 97.7L794 91.4V104z" fill="#a020e0"/>
<!-- channel markers -->
<path d="M0.6 231.8H14.4L19 240L14.4 248.2H0.6z" fill="#000" stroke="#e60000" stroke-width="1.3"/>
<text x="7.8" y="245" font-family="'Liberation Sans', sans-serif" font-size="14" fill="#e60000" stroke="#e60000" stroke-width="0.3" text-anchor="middle">1</text>
<path d="M0.6 369.6H14.4L19.4 378L14.4 386.4H0.6z" fill="#000" stroke="#e6e600" stroke-width="1.3"/>
<text x="7.8" y="382.8" font-family="'Liberation Sans', sans-serif" font-size="14" fill="#e6e600" stroke="#e6e600" stroke-width="0.3" text-anchor="middle">2</text>

<!-- ===== channel info boxes ===== -->
<rect x="25" y="477" width="210" height="40" fill="#609898"/>
<rect x="26" y="478" width="208" height="19" fill="#0080e0"/>
<rect x="26" y="498" width="208" height="19" fill="#0080e0"/>
<rect x="26" y="478" width="208" height="19" rx="4" fill="#000"/>
<rect x="26" y="498" width="208" height="19" rx="4" fill="#000"/>
<circle cx="35.2" cy="488.2" r="7.8" fill="#e00000"/>
<circle cx="35.2" cy="508.2" r="7.8" fill="#e0e000"/>
<g font-family="'Liberation Sans', sans-serif" font-size="14" text-anchor="middle" fill="#000" stroke="#000" stroke-width="0.3">
  <text x="35.2" y="493">1</text>
  <text x="35.2" y="513">2</text>
</g>
<text x="42.5" y="494" class="m" fill="#e60000">1V-</text>
<text x="130.6" y="494" class="m" fill="#e60000">0.60div</text>
<text x="42.5" y="514" class="m" fill="#e6e600">1V-</text>
<text x="130.6" y="514" class="m" fill="#e6e600">-2.16div</text>

<rect x="235" y="477" width="109" height="40" fill="#609898"/>
<rect x="236" y="478" width="107" height="39" fill="#0080e0"/>
<rect x="236" y="478" width="107" height="39" rx="5" fill="#000"/>
<text x="243.7" y="492" class="m" fill="#fff">(250MS/s)</text>
<text x="243.7" y="512" class="m" fill="#fff">Depth:10K</text>

<!-- ===== measurement panel ===== -->
<rect x="0" y="519" width="319" height="79" fill="#609898"/>
<rect x="2" y="521" width="315" height="75" fill="#0080e0"/>
<rect x="2" y="521" width="315" height="75" rx="4" fill="#000"/>
<g>
  <circle cx="9.5" cy="528.8" r="7.7" fill="#e00000"/>
  <circle cx="9.5" cy="548.1" r="7.7" fill="#e00000"/>
  <circle cx="9.5" cy="567.6" r="7.7" fill="#e0e000"/>
  <circle cx="9.5" cy="587.4" r="7.7" fill="#e00000"/>
  <circle cx="168.2" cy="528.8" r="7.7" fill="#e00000"/>
  <circle cx="168.2" cy="548.1" r="7.7" fill="#e0e000"/>
  <circle cx="168.2" cy="567.6" r="7.7" fill="#e0e000"/>
</g>
<g font-family="'Liberation Sans', sans-serif" font-size="14" text-anchor="middle" fill="#000" stroke="#000" stroke-width="0.3">
  <text x="9.5" y="533.8">1</text>
  <text x="9.5" y="553.1">1</text>
  <text x="9.5" y="572.6">2</text>
  <text x="9.5" y="592.4">1</text>
  <text x="168.2" y="533.8">1</text>
  <text x="168.2" y="553.1">2</text>
  <text x="168.2" y="572.6">2</text>
</g>
<text x="21.5" y="533.6" class="m" fill="#e60000">F:1.246MHz</text>
<text x="21.5" y="553" class="m" fill="#e60000">Ma:3.680v</text>
<text x="21.5" y="572.6" class="m" fill="#e6e600">F:170.1KHz</text>
<text x="21.5" y="592.6" class="m" fill="#e60000">Vp:4.080v</text>
<text x="181.5" y="533.6" class="m" fill="#e60000">Va:3.240v</text>
<text x="181.5" y="553" class="m" fill="#e6e600">Ma:3.520v</text>
<text x="181.5" y="572.6" class="m" fill="#e6e600">Vp:3.800v</text>

<!-- ===== menu ===== -->
<rect x="319" y="538" width="481" height="60" fill="#0060a0"/>
<rect x="319" y="520" width="99" height="18" rx="9" fill="#000"/>
<text x="333.8" y="534" class="m" fill="#fff">M:2.0us</text>
<rect x="664.5" y="519.6" width="130" height="18" rx="9" fill="#000"/>
<circle cx="675.3" cy="528.4" r="7.6" fill="#e00000"/>
<text x="675.3" y="533.2" font-family="'Liberation Sans', sans-serif" font-size="14" text-anchor="middle" fill="#000" stroke="#000" stroke-width="0.3">1</text>
<path d="M685.5 522.5H692L697.6 535.2H705" fill="none" stroke="#e8e0f8" stroke-width="1.2"/>
<text x="706.5" y="535.2" class="m" fill="#fff">2.84V</text>

<!-- buttons -->
<g shape-rendering="crispEdges">
  <rect x="322" y="540" width="91" height="58" fill="#0050a8"/>
  <rect x="323" y="541" width="89" height="56" rx="2" fill="#002448"/>
  <rect x="323" y="541" width="87" height="54" rx="2" fill="#58b0f8"/>
  <rect x="324" y="542" width="86" height="53" rx="2" fill="#0080e0"/>
  <rect x="341" y="571" width="50" height="20" fill="#e0e0e0"/>
</g>
<text x="346.5" y="562" class="m" fill="#001020">Type</text>
<text x="341.5" y="585.6" class="m" fill="#000">Image</text>
<g shape-rendering="crispEdges">
  <rect x="597" y="540" width="91" height="58" fill="#0050a8"/>
  <rect x="598" y="541" width="89" height="56" rx="2" fill="#002448"/>
  <rect x="598" y="541" width="87" height="54" rx="2" fill="#58b0f8"/>
  <rect x="599" y="542" width="86" height="53" rx="2" fill="#0080e0"/>
</g>
<text x="621.1" y="573.6" class="m" fill="#001020">Save</text>

<rect x="4.00" y="242.90" width="3.1" height="3" fill="#000"/>
<rect x="9.00" y="242.90" width="3.1" height="3" fill="#000"/>
<rect x="31.40" y="490.90" width="3.1" height="3" fill="#e00000"/>
<rect x="36.40" y="490.90" width="3.1" height="3" fill="#e00000"/>
<rect x="5.70" y="531.70" width="3.1" height="3" fill="#e00000"/>
<rect x="10.70" y="531.70" width="3.1" height="3" fill="#e00000"/>
<rect x="5.70" y="551.00" width="3.1" height="3" fill="#e00000"/>
<rect x="10.70" y="551.00" width="3.1" height="3" fill="#e00000"/>
<rect x="5.70" y="590.30" width="3.1" height="3" fill="#e00000"/>
<rect x="10.70" y="590.30" width="3.1" height="3" fill="#e00000"/>
<rect x="164.40" y="531.70" width="3.1" height="3" fill="#e00000"/>
<rect x="169.40" y="531.70" width="3.1" height="3" fill="#e00000"/>
<rect x="671.50" y="531.30" width="3.1" height="3" fill="#e00000"/>
<rect x="676.50" y="531.30" width="3.1" height="3" fill="#e00000"/>

</svg>
</body></html>
